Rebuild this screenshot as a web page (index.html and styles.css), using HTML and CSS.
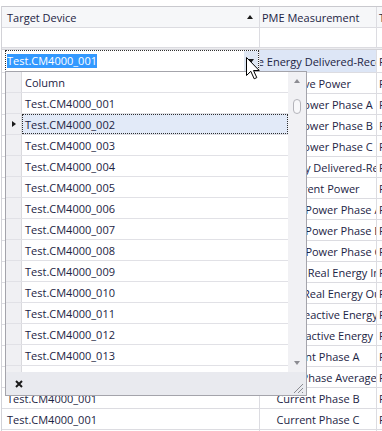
FILE: index.html
```html
<!DOCTYPE html>
<html lang="en">
<head>
  <meta charset="UTF-8">
  <title>Target Device Grid</title>
  <link rel="stylesheet" href="styles.css">
</head>
<body>
  <div class="grid">
    <div class="row head">
      <div class="cell c1">Target Device<span class="sort"></span></div>
      <div class="cell c2">PME Measurement</div>
      <div class="cell c3">Type</div>
    </div>
    <div class="row blank">
      <div class="cell c1"></div>
      <div class="cell c2"></div>
      <div class="cell c3"></div>
    </div>
    <div class="sep"></div>
    <div class="row edit">
      <div class="cell c1">
        <div class="editor">
          <span class="selected-text">Test.CM4000_001</span>
          <span class="drop"><span class="tri-down"></span></span>
        </div>
      </div>
      <div class="cell c2"><span>Active Energy Delivered-Received</span></div>
      <div class="cell c3">PME</div>
    </div>
    <div class="row"><div class="cell c1">Test.CM4000_001</div><div class="cell c2"><span>Active Power</span></div><div class="cell c3">PME</div></div>
    <div class="row"><div class="cell c1">Test.CM4000_001</div><div class="cell c2"><span>Active Power Phase A</span></div><div class="cell c3">PME</div></div>
    <div class="row"><div class="cell c1">Test.CM4000_001</div><div class="cell c2"><span>Active Power Phase B</span></div><div class="cell c3">PME</div></div>
    <div class="row"><div class="cell c1">Test.CM4000_001</div><div class="cell c2"><span>Active Power Phase C</span></div><div class="cell c3">PME</div></div>
    <div class="row"><div class="cell c1">Test.CM4000_001</div><div class="cell c2"><span>Apparent Energy Delivered-Received</span></div><div class="cell c3">PME</div></div>
    <div class="row"><div class="cell c1">Test.CM4000_001</div><div class="cell c2"><span>Apparent Power</span></div><div class="cell c3">PME</div></div>
    <div class="row"><div class="cell c1">Test.CM4000_001</div><div class="cell c2"><span>Apparent Power Phase A</span></div><div class="cell c3">PME</div></div>
    <div class="row"><div class="cell c1">Test.CM4000_001</div><div class="cell c2"><span>Apparent Power Phase B</span></div><div class="cell c3">PME</div></div>
    <div class="row"><div class="cell c1">Test.CM4000_001</div><div class="cell c2"><span>Apparent Power Phase C</span></div><div class="cell c3">PME</div></div>
    <div class="row"><div class="cell c1">Test.CM4000_001</div><div class="cell c2"><span>Delivered Real Energy In</span></div><div class="cell c3">PME</div></div>
    <div class="row"><div class="cell c1">Test.CM4000_001</div><div class="cell c2"><span>Delivered Real Energy Out</span></div><div class="cell c3">PME</div></div>
    <div class="row"><div class="cell c1">Test.CM4000_001</div><div class="cell c2"><span>Delivered Reactive Energy In</span></div><div class="cell c3">PME</div></div>
    <div class="row"><div class="cell c1">Test.CM4000_001</div><div class="cell c2"><span>Delivered Reactive Energy Out</span></div><div class="cell c3">PME</div></div>
    <div class="row"><div class="cell c1">Test.CM4000_001</div><div class="cell c2"><span>Current Phase A</span></div><div class="cell c3">PME</div></div>
    <div class="row"><div class="cell c1">Test.CM4000_001</div><div class="cell c2"><span>Current Phase Average</span></div><div class="cell c3">PME</div></div>
    <div class="row"><div class="cell c1">Test.CM4000_001</div><div class="cell c2"><span>Current Phase B</span></div><div class="cell c3">PME</div></div>
    <div class="row"><div class="cell c1">Test.CM4000_001</div><div class="cell c2"><span>Current Phase C</span></div><div class="cell c3">PME</div></div>
    <div class="row"><div class="cell c1">Test.CM4000_001</div><div class="cell c2"><span>Voltage A-B</span></div><div class="cell c3">PME</div></div>
  </div>

  <div class="popup">
    <div class="popup-body">
      <div class="list">
        <div class="prow">
          <div class="ind"></div>
          <div class="ptext">Column</div>
        </div>
        <div class="prow"><div class="ind"></div><div class="ptext">Test.CM4000_001</div></div>
        <div class="prow current"><div class="ind"><span class="tri-right"></span></div><div class="ptext">Test.CM4000_002</div></div>
        <div class="prow"><div class="ind"></div><div class="ptext">Test.CM4000_003</div></div>
        <div class="prow"><div class="ind"></div><div class="ptext">Test.CM4000_004</div></div>
        <div class="prow"><div class="ind"></div><div class="ptext">Test.CM4000_005</div></div>
        <div class="prow"><div class="ind"></div><div class="ptext">Test.CM4000_006</div></div>
        <div class="prow"><div class="ind"></div><div class="ptext">Test.CM4000_007</div></div>
        <div class="prow"><div class="ind"></div><div class="ptext">Test.CM4000_008</div></div>
        <div class="prow"><div class="ind"></div><div class="ptext">Test.CM4000_009</div></div>
        <div class="prow"><div class="ind"></div><div class="ptext">Test.CM4000_010</div></div>
        <div class="prow"><div class="ind"></div><div class="ptext">Test.CM4000_011</div></div>
        <div class="prow"><div class="ind"></div><div class="ptext">Test.CM4000_012</div></div>
        <div class="prow"><div class="ind"></div><div class="ptext">Test.CM4000_013</div></div>
        <div class="prow filler"><div class="ind"></div><div class="ptext"></div></div>
      </div>
      <div class="scrollbar">
        <span class="tri-up"></span>
        <span class="thumb"></span>
        <span class="tri-down grey"></span>
      </div>
    </div>
    <div class="popup-foot">
      <svg class="close" width="8" height="8" viewBox="0 0 8 8">
        <path d="M1 1 L7 7 M7 1 L1 7" stroke="#1a1a1a" stroke-width="2"/>
      </svg>
      <svg class="grip" width="11" height="11" viewBox="0 0 11 11">
        <path d="M10 1 L1 10 M10 5 L5 10 M10 9 L9 10" stroke="#8a8a90" stroke-width="1"/>
      </svg>
    </div>
  </div>

  <svg class="cursor" width="15" height="23" viewBox="0 0 15 23">
    <path d="M0.5 0.5 V18.5 L4.8 14.3 L8.2 21.8 L10.8 20.6 L7.5 13.5 H13.2 Z" fill="#fff" stroke="#000" stroke-width="1"/>
  </svg>
</body>
</html>
```

FILE: styles.css
```css
body {
  margin: 0;
  background: #fff;
  font-family: "Open Sans", sans-serif;
  font-size: 11px;
  color: #1c2444;
  overflow: hidden;
}

.grid {
  margin: 6px 0 0 1px;
  border-left: 1px solid #d2d2d7;
}

.row {
  display: flex;
  height: 20px;
  border-bottom: 1px solid #dcdce1;
}

.cell {
  flex: none;
  display: flex;
  align-items: center;
  overflow: hidden;
  white-space: nowrap;
  box-sizing: border-box;
  border-right: 1px solid #dcdce1;
}

.cell span {
  flex: none;
}

.c1 {
  width: 258px;
  padding-left: 5px;
}

.c2 {
  width: 117px;
  justify-content: center;
}

.c3 {
  flex: 1;
  padding-left: 2px;
  border-right: none;
}

.head {
  border-top: 1px solid #c9c9ce;
  background: #f6f7f9;
}

.head .c2 {
  justify-content: flex-start;
  padding-left: 2px;
}

.sort {
  margin-left: auto;
  margin-right: 6px;
  width: 0;
  height: 0;
  border-left: 3px solid transparent;
  border-right: 3px solid transparent;
  border-bottom: 4px solid #1a1a1a;
}

.blank {
  height: 19px;
}

.sep {
  height: 1px;
  background: #ececef;
  border-bottom: 1px solid #d3d3d8;
}

.edit {
  height: 22px;
}

.edit .c1 {
  padding-left: 3px;
  align-items: stretch;
}

.editor {
  flex: 1;
  display: flex;
  align-items: center;
  border: 1px dotted #303030;
  padding-left: 1px;
  background: #fff;
}

.selected-text {
  background: #3399ff;
  color: #fff;
  line-height: 14px;
}

.drop {
  margin-left: auto;
  width: 14px;
  align-self: stretch;
  display: flex;
  align-items: center;
  justify-content: center;
  background: #dfe7f3;
}

.tri-down {
  width: 0;
  height: 0;
  border-left: 3.5px solid transparent;
  border-right: 3.5px solid transparent;
  border-top: 4px solid #1a1a1a;
}

.edit .c2 {
  background: #dde6f6;
}

/* lookup popup */
.popup {
  position: absolute;
  left: 5px;
  top: 71px;
  width: 302px;
  height: 325px;
  box-sizing: border-box;
  border: 1px solid #a4a4ab;
  background: #fff;
  display: flex;
  flex-direction: column;
}

.popup-body {
  display: flex;
  height: 300px;
}

.list {
  width: 282px;
  display: flex;
  flex-direction: column;
}

.prow {
  display: flex;
  height: 20px;
  border-bottom: 1px solid #e1e1e6;
}

.prow.filler {
  flex: 1;
  border-bottom: none;
}

.ind {
  width: 15px;
  border-right: 1px solid #dadade;
  background: #f0f0f3;
  display: flex;
  align-items: center;
  justify-content: center;
}

.ptext {
  flex: 1;
  display: flex;
  align-items: center;
  padding-left: 3px;
}

.current .ptext {
  background: #e2eaf8;
  outline: 1px dotted #303030;
  outline-offset: -1px;
}

.tri-right {
  width: 0;
  height: 0;
  border-top: 3.5px solid transparent;
  border-bottom: 3.5px solid transparent;
  border-left: 4px solid #1a1a1a;
}

.scrollbar {
  flex: 1;
  background: #f1f1f4;
  display: flex;
  flex-direction: column;
  align-items: center;
  padding-top: 7px;
}

.tri-up {
  width: 0;
  height: 0;
  border-left: 3.5px solid transparent;
  border-right: 3.5px solid transparent;
  border-bottom: 4px solid #8c8c92;
}

.thumb {
  margin-top: 16px;
  width: 6px;
  height: 13px;
  border: 1px solid #b4b4ba;
  border-radius: 4px;
  background: #f8f8fa;
}

.tri-down.grey {
  margin-top: auto;
  margin-bottom: 7px;
  border-top-color: #8c8c92;
}

.popup-foot {
  flex: 1;
  background: #e9eaef;
  display: flex;
  align-items: center;
  padding-left: 9px;
  position: relative;
}

.grip {
  position: absolute;
  right: 2px;
  bottom: 1px;
}

.cursor {
  position: absolute;
  left: 246px;
  top: 57px;
}
```
